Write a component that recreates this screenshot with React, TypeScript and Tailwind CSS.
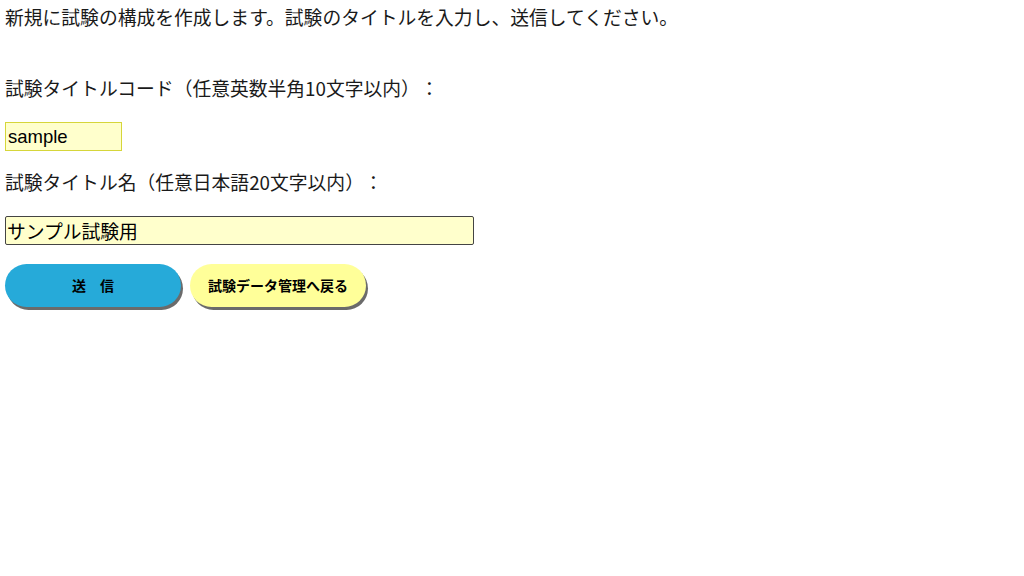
import React from "react";

const App = () => {
  return (
    <div
      className="min-h-screen bg-white px-[5px] text-[18.8px] text-[#1a1a1a] [text-spacing-trim:space-all]"
      style={{ fontFamily: '"Noto Sans CJK JP", "Noto Sans", sans-serif' }}
    >
      <p className="pt-[4px] leading-[26px]">
        新規に試験の構成を作成します。試験のタイトルを入力し、送信してください。
      </p>

      <form className="mt-[45px] flex flex-col">
        {/* Code */}
        <label className="leading-[26px]">
          試験タイトルコード（任意英数半角10文字以内）：
        </label>
        <input
          type="text"
          defaultValue="sample"
          className="mt-[21px] h-[29px] w-[117px] border border-[#d6d63a] bg-[#ffffcc] px-[2px] text-[18.5px] text-black outline-none"
          style={{ fontFamily: '"Liberation Sans", Arial, sans-serif' }}
        />

        {/* Name */}
        <label className="mt-[18px] leading-[26px]">
          試験タイトル名（任意日本語20文字以内）：
        </label>
        <input
          type="text"
          defaultValue="サンプル試験用"
          className="mt-[21px] h-[29px] w-[469px] rounded-[2px] border border-[#444] bg-[#ffffcc] px-[1px] text-[18.8px] text-black outline-none"
        />

        {/* Buttons */}
        <div className="mt-[19px] flex gap-[9px]">
          <button
            type="button"
            className="h-[43px] w-[176px] rounded-full bg-[#26aad9] text-[14px] font-bold text-black shadow-[2px_3px_0_#6b6b6b]"
          >
            送　信
          </button>
          <button
            type="button"
            className="h-[43px] w-[176px] rounded-full bg-[#ffff99] text-[14px] font-bold text-black shadow-[2px_3px_0_#6b6b6b]"
          >
            試験データ管理へ戻る
          </button>
        </div>
      </form>
    </div>
  );
};

export default App;
